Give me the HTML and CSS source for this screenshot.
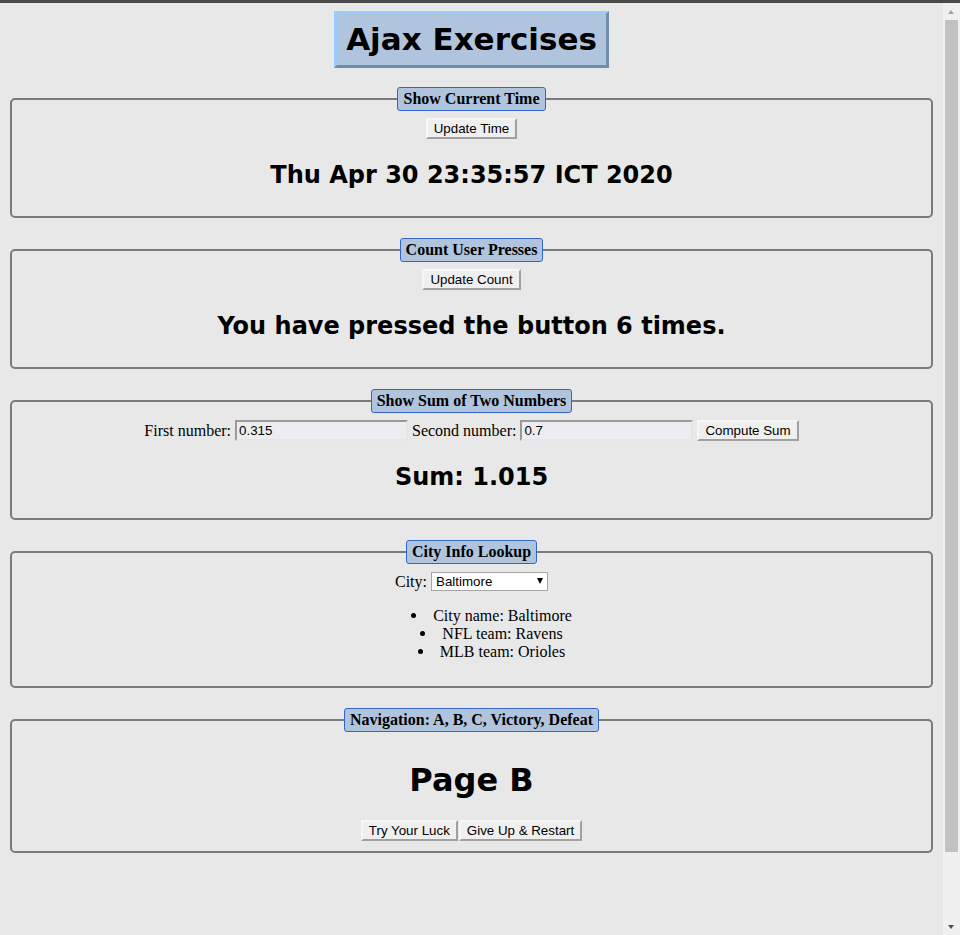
FILE: index.html
```html
<!DOCTYPE html>
<html lang="en">
<head>
<meta charset="utf-8">
<title>Ajax Exercises</title>
<link rel="stylesheet" href="styles.css">
</head>
<body>
<div class="topbar"></div>
<div class="page">
  <div class="title-wrap"><h1 class="title">Ajax Exercises</h1></div>

  <fieldset class="box">
    <legend>Show Current Time</legend>
    <button class="btn" type="button">Update Time</button>
    <h2 class="result">Thu Apr 30 23:35:57 ICT 2020</h2>
  </fieldset>

  <fieldset class="box">
    <legend>Count User Presses</legend>
    <button class="btn" type="button">Update Count</button>
    <h2 class="result">You have pressed the button 6 times.</h2>
  </fieldset>

  <fieldset class="box">
    <legend>Show Sum of Two Numbers</legend>
    <div class="row">First number: <input class="field" type="text" value="0.315"> Second number: <input class="field" type="text" value="0.7"> <button class="btn btn-top" type="button">Compute Sum</button></div>
    <h2 class="result">Sum: 1.015</h2>
  </fieldset>

  <fieldset class="box">
    <legend>City Info Lookup</legend>
    <div class="city-row">City: <span class="select-wrap"><select class="select"><option>Baltimore</option><option>New York</option><option>Boston</option></select></span></div>
    <ul class="info">
      <li>City name: Baltimore</li>
      <li>NFL team: Ravens</li>
      <li>MLB team: Orioles</li>
    </ul>
  </fieldset>

  <fieldset class="box">
    <legend>Navigation: A, B, C, Victory, Defeat</legend>
    <h1 class="page-title">Page B</h1>
    <div class="nav-buttons"><button class="btn" type="button">Try Your Luck</button><button class="btn" type="button">Give Up &amp; Restart</button></div>
  </fieldset>
</div>
<div class="scrollbar">
  <div class="sb-up"></div>
  <div class="sb-thumb"></div>
  <div class="sb-down"></div>
</div>
</body>
</html>
```
FILE: styles.css
```css
html {
  background: #e8e8e8;
}
body {
  margin: 11px 25px 8px 8px;
  background: #e8e8e8;
  font-family: "Liberation Serif", "Times New Roman", serif;
  font-size: 16px;
  color: #000;
}
.topbar {
  position: fixed;
  top: 0;
  left: 0;
  right: 0;
  height: 3px;
  background: #4a4a4a;
  z-index: 5;
}
.title-wrap {
  text-align: center;
  margin-bottom: 19px;
}
.title {
  display: inline-block;
  margin: 0;
  padding: 7px 9px;
  font-family: "DejaVu Sans", Verdana, sans-serif;
  font-size: 31px;
  font-weight: bold;
  line-height: 37px;
  background: #b0c4de;
  border: 3px solid;
  border-color: #99ccff #6e8cab #6e8cab #99ccff;
}
.box {
  margin: 0 2px 20px;
  padding: 7px 12px 10px;
  border: 2px solid #7b7b7b;
  border-radius: 5px;
  text-align: center;
}
.box legend {
  margin: 0 auto;
  padding: 2px 5px;
  background: #b0c4de;
  border: 1px solid #3366cc;
  border-radius: 3px;
  font-weight: bold;
  font-size: 16px;
  line-height: 18px;
}
.btn {
  font-family: "Liberation Sans", Arial, sans-serif;
  font-size: 13.33px;
  line-height: 15px;
  padding: 1px 6px;
  margin: 0;
  border: 2px solid;
  border-color: #f6f6f6 #a0a0a0 #a0a0a0 #f6f6f6;
  background: #efefef;
  color: #000;
  vertical-align: middle;
}
.result {
  margin: 22px 0 17px;
  font-family: "DejaVu Sans", Verdana, sans-serif;
  font-size: 24px;
  font-weight: bold;
  line-height: 28px;
}
.row {
  line-height: 21px;
  height: 21px;
}
.btn-top {
  vertical-align: top;
}
.field {
  box-sizing: border-box;
  width: 173px;
  height: 21px;
  padding: 1px 2px;
  margin: 0;
  font-family: "Liberation Sans", Arial, sans-serif;
  font-size: 13.33px;
  border: 2px solid;
  border-color: #9a9a9a #e6e6e6 #e6e6e6 #9a9a9a;
  background: #ededf1;
  color: #000;
  vertical-align: top;
}
.city-row {
  line-height: 21px;
  height: 21px;
}
.select-wrap {
  position: relative;
  display: inline-block;
  vertical-align: top;
  margin-top: 1px;
  line-height: 16px;
}
.select {
  -webkit-appearance: none;
  appearance: none;
  box-sizing: border-box;
  display: block;
  width: 117px;
  height: 19px;
  margin: 0;
  padding: 0 4px;
  font-family: "Liberation Sans", Arial, sans-serif;
  font-size: 13.33px;
  border: 1px solid #a6a6a6;
  border-radius: 0;
  background: #fff;
  color: #000;
}
.select-wrap::after {
  content: "";
  position: absolute;
  right: 5px;
  top: 6px;
  border-left: 3.5px solid transparent;
  border-right: 3.5px solid transparent;
  border-top: 6px solid #000;
  pointer-events: none;
}
.info {
  margin: 15px 0;
  padding: 0 0 0 40px;
  list-style: none;
  line-height: 18px;
}
.info li::before {
  content: "";
  display: inline-block;
  width: 5px;
  height: 5px;
  border-radius: 50%;
  background: #000;
  margin-right: 17px;
  vertical-align: 3px;
}
.page-title {
  margin: 23px 0 21px;
  font-family: "DejaVu Sans", Verdana, sans-serif;
  font-size: 32px;
  font-weight: bold;
  line-height: 37px;
}
.nav-buttons {
  display: flex;
  justify-content: center;
  gap: 1px;
}
.scrollbar {
  position: fixed;
  top: 3px;
  right: 0;
  bottom: 0;
  width: 17px;
  background: #f0f0f0;
}
.sb-up {
  position: absolute;
  top: 7px;
  left: 5px;
  border-left: 3.5px solid transparent;
  border-right: 3.5px solid transparent;
  border-bottom: 4px solid #a3a3a3;
}
.sb-thumb {
  position: absolute;
  top: 17px;
  left: 2px;
  width: 13px;
  height: 832px;
  background: #c1c1c1;
}
.sb-down {
  position: absolute;
  bottom: 6px;
  left: 5px;
  border-left: 3.5px solid transparent;
  border-right: 3.5px solid transparent;
  border-top: 4px solid #505050;
}
```
